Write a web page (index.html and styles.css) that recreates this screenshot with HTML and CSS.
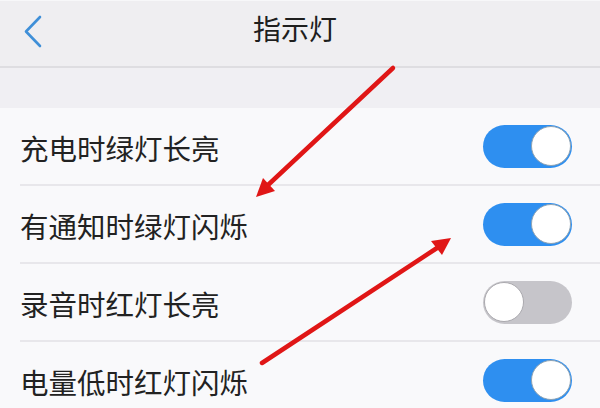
FILE: index.html
```html
<!DOCTYPE html>
<html lang="zh">
<head>
<meta charset="utf-8">
<title>指示灯</title>
<link rel="stylesheet" href="styles.css">
</head>
<body>
<div class="screen">
  <header class="nav">
    <svg class="back" width="24" height="36" viewBox="0 0 24 36">
      <polyline points="17,4 3,18.5 17,33" fill="none" stroke="#3f8fd8" stroke-width="2.6" stroke-linecap="round" stroke-linejoin="round"/>
    </svg>
    <div class="title">指示灯</div>
  </header>
  <div class="band"></div>
  <ul class="list">
    <li class="row"><span class="label">充电时绿灯长亮</span><span class="toggle on"><span class="knob"></span></span></li>
    <li class="row"><span class="label">有通知时绿灯闪烁</span><span class="toggle on"><span class="knob"></span></span></li>
    <li class="row"><span class="label">录音时红灯长亮</span><span class="toggle off"><span class="knob"></span></span></li>
    <li class="row"><span class="label">电量低时红灯闪烁</span><span class="toggle on"><span class="knob"></span></span></li>
  </ul>
  <svg class="arrows" width="600" height="408" viewBox="0 0 600 408">
    <line x1="393" y1="68" x2="268" y2="185" stroke="#e01616" stroke-width="4.5" stroke-linecap="round"/>
    <polygon points="256,197 275,191 263,178" fill="#e01616"/>
    <line x1="262" y1="363" x2="437" y2="248" stroke="#e01616" stroke-width="4.5" stroke-linecap="round"/>
    <polygon points="451,238 442,255 431,241" fill="#e01616"/>
  </svg>
</div>
</body>
</html>
```
FILE: styles.css
```css
html, body {
  margin: 0;
  padding: 0;
}
body {
  width: 600px;
  height: 408px;
  overflow: hidden;
  background: #f9f9fb;
  font-family: "Noto Sans CJK SC", "Noto Sans", sans-serif;
}
.screen {
  position: relative;
  width: 600px;
  height: 408px;
  overflow: hidden;
}
.nav {
  height: 68px;
  background: #efeef1;
  border-top: 1px solid #f7f7f9;
  border-bottom: 2px solid #dedde1;
  display: flex;
  align-items: center;
  justify-content: center;
  position: relative;
  box-sizing: border-box;
}
.back {
  position: absolute;
  left: 23px;
  top: 12px;
}
.title {
  font-size: 28px;
  color: #1e1e1e;
  line-height: 1;
  margin-top: -11px;
  margin-right: 10px;
}
.band {
  height: 40px;
  background: #f0eff3;
}
.list {
  list-style: none;
  margin: 0;
  padding: 0 0 0 20px;
  background: #f9f9fb;
}
.row {
  height: 76px;
  border-bottom: 2px solid #e8e7eb;
  display: flex;
  align-items: center;
  justify-content: space-between;
  padding-right: 28px;
}
.label {
  font-size: 28.5px;
  color: #222;
  line-height: 1;
  margin-top: 4px;
}
.toggle {
  width: 89px;
  height: 43px;
  border-radius: 22px;
  display: flex;
  align-items: center;
  box-sizing: border-box;
  padding: 0 1px;
}
.toggle.on {
  background: #2e8ff0;
  justify-content: flex-end;
}
.toggle.off {
  background: #c6c5ca;
  justify-content: flex-start;
}
.knob {
  width: 40px;
  height: 40px;
  border-radius: 50%;
  background: #fff;
  box-sizing: border-box;
  border: 1px solid #8fa3b3;
}
.toggle.off .knob {
  border-color: #aaa9ae;
}
.arrows {
  position: absolute;
  left: 0;
  top: 0;
  pointer-events: none;
}
```
